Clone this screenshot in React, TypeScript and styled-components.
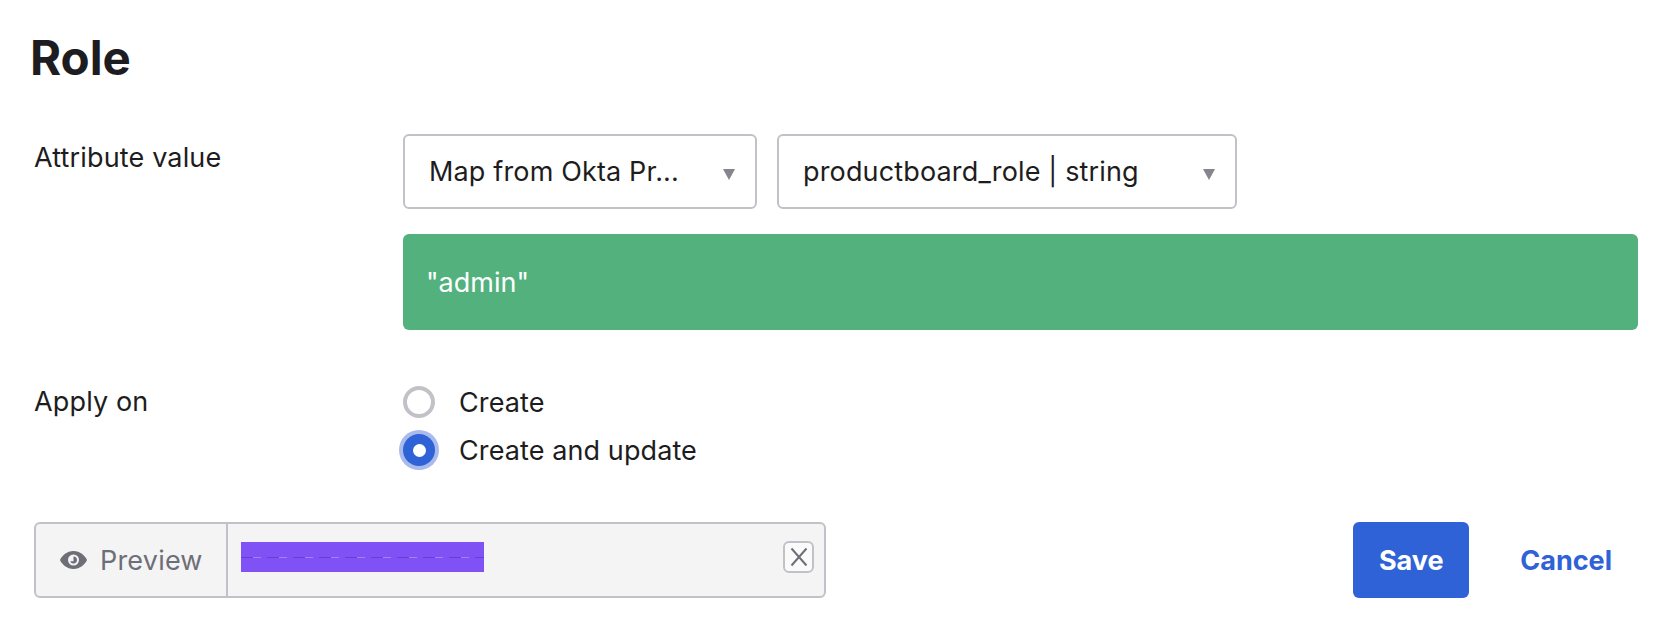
import React from "react";
import styled, { createGlobalStyle } from "styled-components";

const Global = createGlobalStyle`
  html, body { margin: 0; padding: 0; background: #fff; }
  body { font-family: "Inter", "Liberation Sans", sans-serif; color: #1d1d21; }
`;

const Page = styled.div`
  width: 1670px;
  height: 618px;
  box-sizing: border-box;
  padding: 30px 32px 0 30px;
  overflow: hidden;
`;

const Title = styled.h1`
  margin: 0;
  height: 56px;
  font-size: 47.5px;
  line-height: 56px;
  font-weight: 700;
`;

const FieldRow = styled.div<{ $top: number }>`
  display: grid;
  grid-template-columns: 368px 1fr;
  padding-left: 4px;
  margin-top: ${(p) => p.$top}px;
`;

const Label = styled.div<{ $top?: number }>`
  font-size: 27px;
  letter-spacing: 0.15px;
  line-height: 32px;
  margin-top: ${(p) => p.$top ?? 0}px;
`;

const Fields = styled.div`
  margin-left: 1px;
`;

const SelectRow = styled.div`
  display: flex;
  gap: 20px;
`;

const Select = styled.div<{ $width: number }>`
  width: ${(p) => p.$width}px;
  height: 75px;
  box-sizing: border-box;
  border: 2px solid #c1c1c8;
  border-radius: 6px;
  padding: 0 20px 0 24px;
  display: flex;
  align-items: center;
  justify-content: space-between;
  font-size: 27px;
  letter-spacing: 0.15px;
  background: #fff;
`;

const Caret = styled.span`
  width: 0;
  height: 0;
  border-left: 6.5px solid transparent;
  border-right: 6.5px solid transparent;
  border-top: 11px solid #85858c;
  margin-top: 5px;
`;

const ValueBox = styled.div`
  margin-top: 25px;
  height: 96px;
  background: #52b17d;
  border-radius: 6px;
  color: #fff;
  display: flex;
  align-items: center;
  padding-left: 23px;
  font-size: 27px;
`;

const RadioList = styled.div`
  display: flex;
  flex-direction: column;
  gap: 16px;
`;

const RadioRow = styled.div`
  display: flex;
  align-items: center;
  gap: 24px;
  height: 32px;
  font-size: 27px;
  letter-spacing: 0.1px;
`;

const Radio = styled.span<{ $checked?: boolean }>`
  width: 32px;
  height: 32px;
  box-sizing: border-box;
  border-radius: 50%;
  flex: none;
  display: flex;
  align-items: center;
  justify-content: center;
  border: ${(p) => (p.$checked ? "0" : "4px solid #c1c1c8")};
  background: ${(p) => (p.$checked ? "#2f62d6" : "#fff")};
  box-shadow: ${(p) => (p.$checked ? "0 0 0 4px #a9bbec" : "none")};
`;

const RadioDot = styled.span`
  width: 13px;
  height: 13px;
  border-radius: 50%;
  background: #fff;
`;

const Footer = styled.div`
  display: flex;
  align-items: center;
  justify-content: space-between;
  padding-left: 4px;
  margin-top: 56px;
  padding-right: 26px;
`;

const PreviewBox = styled.div`
  width: 792px;
  height: 76px;
  box-sizing: border-box;
  display: flex;
  border: 2px solid #c1c1c8;
  border-radius: 6px;
  background: #f4f4f4;
`;

const PreviewLabel = styled.div`
  width: 192px;
  flex: none;
  box-sizing: border-box;
  border-right: 2px solid #c1c1c8;
  display: flex;
  align-items: center;
  gap: 13px;
  padding-left: 24px;
  font-size: 27px;
  letter-spacing: 0.2px;
  color: #6e6e78;
`;

const PreviewValue = styled.div`
  flex: 1;
  display: flex;
  align-items: center;
  justify-content: space-between;
  padding: 0 10px 6px 13px;
`;

const Redaction = styled.div`
  width: 243px;
  height: 30px;
  background: #8052f5;
  display: flex;
  align-items: center;
`;

const RedactionLine = styled.div`
  width: 100%;
  height: 1px;
  background: repeating-linear-gradient(90deg, #6a3fd0 0 12px, #a184f0 12px 20px, #8052f5 20px 26px);
`;

const ClearButton = styled.div`
  width: 31px;
  height: 32px;
  box-sizing: border-box;
  border: 2px solid #c1c1c8;
  border-radius: 6px;
  display: flex;
  align-items: center;
  justify-content: center;
  background: #fafafa;
`;

const Actions = styled.div`
  display: flex;
  align-items: center;
  gap: 51px;
`;

const SaveButton = styled.div`
  width: 116px;
  height: 76px;
  background: #2f62d6;
  border-radius: 6px;
  color: #fff;
  font-size: 27px;
  font-weight: 700;
  display: flex;
  align-items: center;
  justify-content: center;
`;

const CancelLink = styled.div`
  color: #2f62d6;
  font-size: 27px;
  font-weight: 700;
`;

const Eye = () => (
  <svg width="27" height="18" viewBox="0 0 27 18" aria-hidden="true">
    <path
      fill="#6e6e78"
      fillRule="evenodd"
      d="M13.5 0C20 0 25 4.5 27 9c-2 4.5-7 9-13.5 9S2 13.500 0 9C2 4.500 7 0 13.500 0Zm0 3.500a5.500 5.500 0 1 0 0 11 5.500 5.500 0 0 0 0-11Z"
    />
    <path fill="#6e6e78" d="M13.500 5.500a3.500 3.500 0 1 1-3.300 4.700h3.300Z" />
  </svg>
);

const CloseIcon = () => (
  <svg width="18" height="20" viewBox="0 0 18 20" aria-hidden="true">
    <path d="M1.500 1.500 16.500 18.500M16.500 1.500 1.500 18.500" stroke="#6e6e78" strokeWidth="2" fill="none" />
  </svg>
);

export default function App() {
  return (
    <Page>
      <Global />
      <Title>Role</Title>
      <FieldRow $top={48}>
        <Label $top={8}>Attribute value</Label>
        <Fields>
          <SelectRow>
            <Select $width={354}>
              Map from Okta Pr...
              <Caret />
            </Select>
            <Select $width={460}>
              productboard_role | string
              <Caret />
            </Select>
          </SelectRow>
          <ValueBox>"admin"</ValueBox>
        </Fields>
      </FieldRow>
      <FieldRow $top={56}>
        <Label>Apply on</Label>
        <Fields>
          <RadioList>
            <RadioRow>
              <Radio />
              Create
            </RadioRow>
            <RadioRow>
              <Radio $checked>
                <RadioDot />
              </Radio>
              Create and update
            </RadioRow>
          </RadioList>
        </Fields>
      </FieldRow>
      <Footer>
        <PreviewBox>
          <PreviewLabel>
            <Eye />
            Preview
          </PreviewLabel>
          <PreviewValue>
            <Redaction>
              <RedactionLine />
            </Redaction>
            <ClearButton>
              <CloseIcon />
            </ClearButton>
          </PreviewValue>
        </PreviewBox>
        <Actions>
          <SaveButton>Save</SaveButton>
          <CancelLink>Cancel</CancelLink>
        </Actions>
      </Footer>
    </Page>
  );
}
